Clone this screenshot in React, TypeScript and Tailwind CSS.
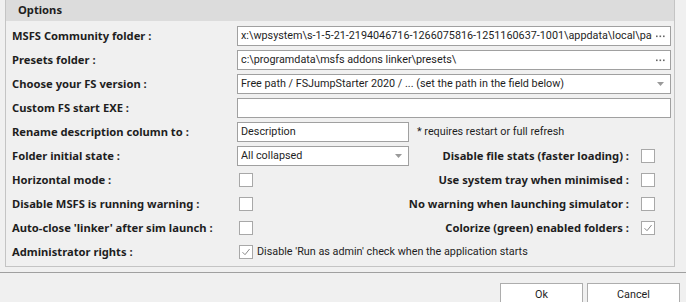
const label = "font-bold text-[11.2px] text-[#1e1e1e] whitespace-nowrap";
const plain = "text-[10.8px] text-[#1e1e1e] whitespace-nowrap [font-family:Roboto,'Noto_Sans',sans-serif]";

function Check({ checked = false }: { checked?: boolean }) {
  return (
    <div className="flex h-[14px] w-[14px] items-center justify-center border border-[#a8a8a8] bg-white">
      {checked && (
        <svg width="10" height="10" viewBox="0 0 10 10">
          <path d="M1.5 5.2 L4 7.7 L8.6 2" fill="none" stroke="#8a8a8a" strokeWidth="1" />
        </svg>
      )}
    </div>
  );
}

function TextBox({ value = "", dots = false, arrow = false, wide = true }: { value?: string; dots?: boolean; arrow?: boolean; wide?: boolean }) {
  return (
    <div className={`flex h-[20px] min-w-0 items-center border border-[#a0a0a0] bg-white pl-[3px] pr-[5px] ${wide ? "flex-1" : "w-[172px]"}`}>
      <span className={`min-w-0 flex-1 overflow-hidden ${plain}`}>{value}</span>
      {dots && (
        <svg width="9" height="3" viewBox="0 0 9 3" className="ml-[4px] shrink-0">
          <rect x="0" y="0.5" width="1.6" height="1.6" fill="#666" />
          <rect x="3.5" y="0.5" width="1.6" height="1.6" fill="#666" />
          <rect x="7" y="0.5" width="1.6" height="1.6" fill="#666" />
        </svg>
      )}
      {arrow && (
        <svg width="7" height="4" viewBox="0 0 7 4" className="ml-[4px] mr-[1px] shrink-0">
          <path d="M0 0 H7 L3.5 4 Z" fill="#9a9a9a" />
        </svg>
      )}
    </div>
  );
}

function Row({ name, children }: { name: string; children: React.ReactNode }) {
  return (
    <div className="flex h-[24px] items-center">
      <div className={`w-[225px] shrink-0 ${label}`}>{name}</div>
      <div className="flex min-w-0 flex-1 items-center">{children}</div>
    </div>
  );
}

function RightCheck({ text, checked = false }: { text: string; checked?: boolean }) {
  return (
    <div className="ml-auto flex items-center">
      <span className={label}>{text}</span>
      <div className="ml-[12px]">
        <Check checked={checked} />
      </div>
      <div className="w-[16px]" />
    </div>
  );
}

export default function App() {
  return (
    <div
      className="flex h-[302px] w-[686px] flex-col overflow-hidden bg-[#f0f0f0]"
      style={{ fontFamily: '"Noto Sans", "DejaVu Sans", sans-serif' }}
    >
      {/* Options panel */}
      <div className="ml-[5px] h-[267px] w-[670px] shrink-0 border-x border-b border-[#c4c4c4]">
        <div className="flex h-[21px] items-center bg-[#dcdcdc] pl-[12px] text-[11.2px] font-bold text-[#1e1e1e]">
          Options
        </div>
        <div className="pl-[6px] pr-[3px] pt-[3px]">
          <Row name="MSFS Community folder :">
            <TextBox value="x:\wpsystem\s-1-5-21-2194046716-1266075816-1251160637-1001\appdata\local\packages" dots />
          </Row>
          <Row name="Presets folder :">
            <TextBox value="c:\programdata\msfs addons linker\presets\" dots />
          </Row>
          <Row name="Choose your FS version :">
            <TextBox value="Free path / FSJumpStarter 2020 / ... (set the path in the field below)" arrow />
          </Row>
          <Row name="Custom FS start EXE :">
            <TextBox />
          </Row>
          <Row name="Rename description column to :">
            <TextBox value="Description" wide={false} />
            <span className={`ml-[8px] ${plain}`}>* requires restart or full refresh</span>
          </Row>
          <Row name="Folder initial state :">
            <TextBox value="All collapsed" arrow wide={false} />
            <RightCheck text="Disable file stats (faster loading) :" />
          </Row>
          <Row name="Horizontal mode :">
            <div className="ml-[2px]"><Check /></div>
            <RightCheck text="Use system tray when minimised :" />
          </Row>
          <Row name="Disable MSFS is running warning :">
            <div className="ml-[2px]"><Check /></div>
            <RightCheck text="No warning when launching simulator :" />
          </Row>
          <Row name="Auto-close 'linker' after sim launch :">
            <div className="ml-[2px]"><Check /></div>
            <RightCheck text="Colorize (green) enabled folders :" checked />
          </Row>
          <Row name="Administrator rights :">
            <div className="ml-[2px]"><Check checked /></div>
            <span className={`ml-[4px] ${plain}`}>Disable 'Run as admin' check when the application starts</span>
          </Row>
        </div>
      </div>

      {/* Footer */}
      <div className="mt-[5px] shrink-0 border-t border-[#a0a0a0]">
        <div className="flex justify-end gap-[4px] pr-[6px] pt-[10px]">
          <button className={`h-[24px] w-[83px] border border-[#adadad] bg-white ${plain}`}>Ok</button>
          <button className={`h-[24px] w-[93px] border border-[#adadad] bg-white ${plain}`}>Cancel</button>
        </div>
      </div>
    </div>
  );
}
